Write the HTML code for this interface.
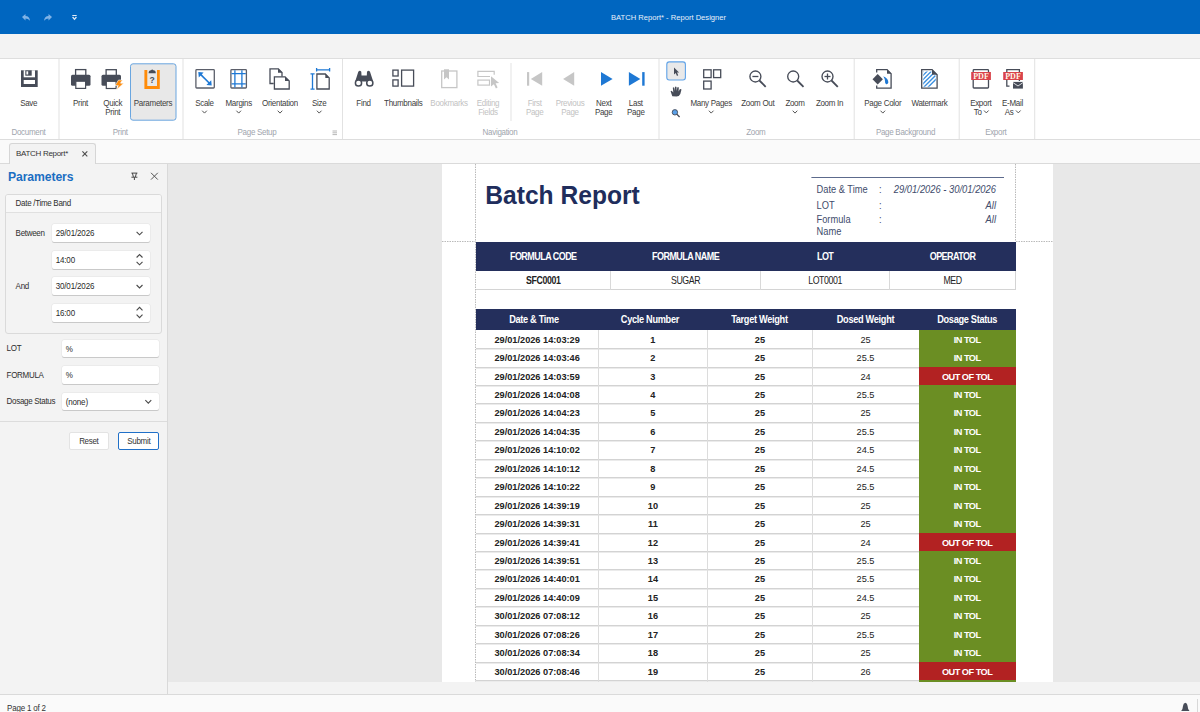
<!DOCTYPE html>
<html><head><meta charset="utf-8">
<style>
*{box-sizing:border-box;margin:0;padding:0}
html,body{width:1200px;height:712px;overflow:hidden;background:#f3f3f3;font-family:"Liberation Sans",sans-serif;color:#3b3b3b}
.a{position:absolute}
.lbl{position:absolute;font-size:8px;letter-spacing:-0.3px;transform:scaleY(1.18);transform-origin:50% 7.7px;color:#404040;text-align:center;white-space:nowrap;line-height:9px}
.glbl{position:absolute;font-size:8px;letter-spacing:-0.3px;transform:scaleY(1.18);transform-origin:50% 7.7px;color:#a0a5ad;text-align:center;white-space:nowrap;line-height:9px}
.dis{color:#c2c2c2}
svg{position:absolute;overflow:visible}
.inp{position:absolute;background:#fff;border-radius:2px;box-shadow:0 1px 0 #c9c9c9,0 0 0 0.5px #e3e3e3;font-size:8px;letter-spacing:-0.15px;color:#2a2a2a;padding-left:4px}
.plbl{position:absolute;font-size:8px;letter-spacing:-0.3px;transform:translateY(0.8px) scaleY(1.18);transform-origin:0 8.2px;color:#2e2e2e;white-space:nowrap;line-height:10px}
.hdr{position:absolute;background:#242f5c}
.cell{position:absolute;text-align:center;white-space:nowrap;color:#222}
.inp span{display:inline-block;transform:translateY(0.8px) scaleY(1.18)}

</style></head><body>
<div class="a" style="left:0;top:0;width:1200px;height:34px;background:#0066c0"></div>
<div class="a" style="left:0;top:11.5px;width:1337px;text-align:center;font-size:7.6px;color:#e8f0fa;line-height:12px;white-space:nowrap">BATCH Report* - Report Designer</div>
<div class="a" style="left:0;top:34px;width:1200px;height:24px;background:#f3f3f3"></div>
<div class="a" style="left:0;top:58px;width:1200px;height:1px;background:#dedede"></div>
<div class="a" style="left:0;top:59px;width:1200px;height:80px;background:#fff"></div>
<div class="a" style="left:0;top:139px;width:1200px;height:1px;background:#dddddd"></div>
<div class="a" style="left:0;top:140px;width:1200px;height:23px;background:#fafafa"></div>
<div class="a" style="left:0;top:163px;width:1200px;height:1px;background:#dadada"></div>
<div class="a" style="left:9px;top:143px;width:87px;height:21px;background:#f3f3f3;border:1px solid #d6d6d6;border-bottom:none;border-radius:3px 3px 0 0"></div>
<div class="a" style="left:16px;top:148.5px;font-size:8px;letter-spacing:-0.3px;color:#333;line-height:10px;white-space:nowrap">BATCH Report*</div>
<div class="a" style="left:0;top:164px;width:167px;height:530px;background:#f3f3f3"></div>
<div class="a" style="left:167px;top:164px;width:1px;height:530px;background:#d9d9d9"></div>
<div class="a" style="left:168px;top:164px;width:1032px;height:518px;background:#e8e8e8"></div>
<div class="a" style="left:442px;top:164px;width:611px;height:518px;background:#fff"></div>
<svg style="left:0;top:0" width="1200" height="140"><path d="M22 17 L25.5 14 L25.5 16 Q29.5 16 30 20.8 Q28 18.6 25.5 18.6 L25.5 20.5 Z" fill="#80b3e6"/><path d="M52 17 L48.5 14 L48.5 16 Q44.5 16 44 20.8 Q46 18.6 48.5 18.6 L48.5 20.5 Z" fill="#80b3e6"/><rect x="72.3" y="15" width="4.4" height="1" fill="#dfeaf7"/><path d="M72.6 17 L74.5 19.3 L76.4 17" fill="none" stroke="#dfeaf7" stroke-width="1.3"/><rect x="21" y="70.3" width="16.7" height="16.7" fill="#474c58"/><rect x="23.7" y="70.3" width="11.3" height="7" fill="#fff"/><rect x="25.3" y="70.3" width="6.4" height="5.4" fill="#474c58"/><rect x="26.4" y="71.3" width="1.8" height="3.2" fill="#fff"/><rect x="23.7" y="80" width="11.3" height="4" fill="#fff"/><rect x="75.6" y="69.6" width="10.2" height="7" fill="#fff" stroke="#474c58" stroke-width="1.3"/><rect x="71" y="74.7" width="19.5" height="11" rx="1.5" fill="#474c58"/><rect x="75.8" y="81.2" width="9.8" height="7.2" fill="#fff" stroke="#474c58" stroke-width="1.2"/><rect x="106.1" y="69.69999999999999" width="10.2" height="7" fill="#fff" stroke="#474c58" stroke-width="1.3"/><rect x="101.5" y="74.8" width="19.5" height="11" rx="1.5" fill="#474c58"/><rect x="106.3" y="81.3" width="9.8" height="7.2" fill="#fff" stroke="#474c58" stroke-width="1.2"/><path d="M118.5 80 L115 85.5 L118.3 85.5 L116.5 89.7 L123.7 83.2 L120.2 83.2 L122.5 80 Z" fill="#ff8c0a" stroke="#fff" stroke-width="0.6"/><rect x="130.5" y="63.8" width="45.5" height="56.4" rx="2.5" fill="#e8e8e8" stroke="#6aa6e0" stroke-width="1"/><path d="M144.4 70.1 L147.3 70.1 L147.3 85.9 L157 85.9 L157 70.1 L159.8 70.1 L159.8 89.1 L144.4 89.1 Z" fill="#ff8c0a"/><path d="M148.6 73.2 Q148.6 70.4 151 70.2 Q152.2 68.6 153.4 70.2 Q155.8 70.4 155.8 73.2 Z" fill="#474c58"/><text x="152.1" y="83" font-family="Liberation Sans" font-weight="bold" font-size="8.5" fill="#474c58" text-anchor="middle">?</text><rect x="195.9" y="69.6" width="18.4" height="18.4" rx="0.8" fill="#fff" stroke="#5b5f6a" stroke-width="1.3"/><path d="M200.3 74.1 L209.7 83.5" stroke="#1e78d4" stroke-width="1.6"/><path d="M198.3 72.1 L203.6 72.6 L198.8 77.4 Z M211.7 85.5 L206.4 85 L211.2 80.2 Z" fill="#1e78d4"/><rect x="230.9" y="69.6" width="15.5" height="18.4" rx="0.8" fill="#fff" stroke="#5b5f6a" stroke-width="1.3"/><path d="M234.9 70.2 V87.4 M241.9 70.2 V87.4 M231.5 73.6 H245.8 M231.5 83.8 H245.8" stroke="#1e78d4" stroke-width="1.3"/><path d="M273.7 83.5 H270 V68.8 H278.3 L282 72.5 V76.5" fill="none" stroke="#474c58" stroke-width="1.3"/><path d="M278 68.5 L282.3 72.8 L278 72.8 Z" fill="#474c58"/><path d="M274.4 76.9 H285 L289.2 81.1 V89 H274.4 Z" fill="#fff" stroke="#474c58" stroke-width="1.3"/><path d="M285 76.6 L289.5 81.1 L285 81.1 Z" fill="#474c58"/><path d="M316.9 74 H325.3 L329.2 77.9 V89 H316.9 Z" fill="#fff" stroke="#474c58" stroke-width="1.3"/><path d="M325.3 73.7 L329.5 77.9 L325.3 77.9 Z" fill="#474c58"/><path d="M312.5 73.8 V89.2 M310.5 73.8 H314.6 M310.5 89.2 H314.6 M317 69.8 H329.6 M316.6 68 V71.6 M329.6 68 V71.6" stroke="#1e78d4" stroke-width="1.3"/><path d="M355.2 81.5 L358.3 71.8 Q359.8 69.8 361.3 71.8 L361.5 75.5 L366.8 75.5 L367 71.8 Q368.5 69.8 370 71.8 L373.2 81.5 Z" fill="#474c58"/><circle cx="358.5" cy="83" r="3.1" fill="#fff" stroke="#474c58" stroke-width="1.5"/><circle cx="369.8" cy="83" r="3.1" fill="#fff" stroke="#474c58" stroke-width="1.5"/><rect x="392.9" y="70.1" width="5.2" height="5.9" fill="none" stroke="#474c58" stroke-width="1.3"/><rect x="392.9" y="79.9" width="5.2" height="6.2" fill="none" stroke="#474c58" stroke-width="1.3"/><rect x="401.6" y="70.1" width="12" height="16" fill="none" stroke="#474c58" stroke-width="1.3"/><rect x="441.7" y="71" width="15.2" height="16.6" fill="none" stroke="#c6c6c6" stroke-width="1.3"/><path d="M444 69.3 H449 V79.5 L446.5 77.3 L444 79.5 Z" fill="#c6c6c6"/><path d="M490 76.5 H477.9 V71.3 H494.2 V74.8" fill="none" stroke="#c6c6c6" stroke-width="1.2"/><rect x="477.9" y="80.1" width="11.6" height="5" fill="none" stroke="#c6c6c6" stroke-width="1.2"/><path d="M491 76.3 L499.2 83 L495.6 83.3 L497.6 87.6 L495.9 88.4 L493.9 84.2 L491 86.6 Z" fill="#c6c6c6"/><rect x="527" y="72.1" width="2.2" height="13.6" fill="#c6c6c6"/><path d="M542.2 72.1 V85.7 L530.8 78.9 Z" fill="#c6c6c6"/><path d="M574.2 72.1 V85.7 L563.1 78.9 Z" fill="#c6c6c6"/><path d="M601 72.1 V85.7 L612.6 78.9 Z" fill="#1e78d4"/><path d="M628.9 72.1 V85.7 L640.3 78.9 Z" fill="#1e78d4"/><rect x="642.2" y="72.1" width="2.4" height="13.6" fill="#1e78d4"/><rect x="510.5" y="63" width="1" height="58" fill="#e4e4e4"/><rect x="666.8" y="61.9" width="18.6" height="18.1" rx="2.5" fill="#e9e9e9" stroke="#60a3e8" stroke-width="1.1"/><path d="M674 67.4 V74.6 L675.7 73.1 L677 75.9 L678.2 75.3 L677 72.6 L679.1 72.4 Z" fill="#474c58"/><path d="M672.3 96.2 L670.6 91.3 Q671.3 90.3 672.4 91.5 L673.3 92.6 L672.8 87.8 Q673.5 86.9 674.3 87.8 L674.8 91 L675 86.9 Q675.8 86.2 676.5 86.9 L676.7 91 L677.3 87.4 Q678.1 86.7 678.8 87.5 L678.6 91.5 L679.8 89.2 Q680.8 88.8 681.5 89.6 L680.3 94 Q679.2 96.6 676.5 96.6 Z" fill="#474c58"/><circle cx="674.9" cy="112.3" r="2.7" fill="#5aa0e8" stroke="#474c58" stroke-width="0.9"/><path d="M676.9 114.3 L679.6 117" stroke="#474c58" stroke-width="1.3"/><rect x="703.7" y="69.8" width="7.4" height="7.8" fill="none" stroke="#474c58" stroke-width="1.3"/><rect x="713.6" y="69.8" width="7.1" height="7.8" fill="none" stroke="#474c58" stroke-width="1.3"/><rect x="703.7" y="81.1" width="7.4" height="7.9" fill="none" stroke="#474c58" stroke-width="1.3"/><circle cx="755.4" cy="76.5" r="5.5" fill="none" stroke="#474c58" stroke-width="1.35"/><path d="M759.4 80.5 L765.6999999999999 86.8" stroke="#474c58" stroke-width="1.8"/><path d="M752.4 76.5 H758.4" stroke="#474c58" stroke-width="1.3"/><circle cx="793.2" cy="76.5" r="5.5" fill="none" stroke="#474c58" stroke-width="1.35"/><path d="M797.2 80.5 L803.5 86.8" stroke="#474c58" stroke-width="1.8"/><circle cx="827.5" cy="76.5" r="5.5" fill="none" stroke="#474c58" stroke-width="1.35"/><path d="M831.5 80.5 L837.8 86.8" stroke="#474c58" stroke-width="1.8"/><path d="M824.5 76.5 H830.5" stroke="#474c58" stroke-width="1.3"/><path d="M827.5 73.5 V79.5" stroke="#474c58" stroke-width="1.3"/><path d="M876.7 72.5 V69.6 H887 L891.1 73.7 V88.1 H876.7 V85.5" fill="#fff" stroke="#474c58" stroke-width="1.3"/><path d="M887 69.3 L891.4 73.7 L887 73.7 Z" fill="#474c58"/><path d="M877.7 74.1 L882.9 79.3 L877.7 84.5 L872.5 79.3 Z" fill="#474c58"/><path d="M883.3 76.2 Q888.6 78.6 888.3 82.8 Q887.8 84.4 886.2 84.2 Q884.8 83.6 885 81 Q884.8 78.5 883.3 76.2 Z" fill="#1e78d4"/><defs><clipPath id="wm"><path d="M923.2 71.4 H931.3 L935.8 75.9 V86.7 H923.2 Z"/></clipPath></defs><path d="M921.7 69.6 H932 L937.1 74.7 V88.1 H921.7 Z" fill="#fff" stroke="#474c58" stroke-width="1.3"/><g clip-path="url(#wm)"><path d="M906.2 88 L924.2 70" stroke="#3a8fe0" stroke-width="1.35"/><path d="M910.4 88 L928.4 70" stroke="#3a8fe0" stroke-width="1.35"/><path d="M914.6 88 L932.6 70" stroke="#3a8fe0" stroke-width="1.35"/><path d="M918.8 88 L936.8 70" stroke="#3a8fe0" stroke-width="1.35"/><path d="M923 88 L941 70" stroke="#3a8fe0" stroke-width="1.35"/><path d="M927.2 88 L945.2 70" stroke="#3a8fe0" stroke-width="1.35"/></g><path d="M932 69.3 L937.4 74.7 L932 74.7 Z" fill="#474c58"/><rect x="973.2" y="69.7" width="15.3" height="18.3" rx="0.8" fill="#fff" stroke="#474c58" stroke-width="1.3"/><rect x="971.2" y="72" width="19.7" height="8" fill="#d9434a"/><text x="981" y="79.1" font-family="Liberation Serif" font-weight="bold" font-size="8" fill="#fff6e8" text-anchor="middle">PDF</text><path d="M1009.5 86.1 H1006.8 V69.7 H1019.4 V81" fill="#fff" stroke="#474c58" stroke-width="1.3"/><rect x="1003.2" y="72" width="19.7" height="8" fill="#d9434a"/><text x="1013" y="79.1" font-family="Liberation Serif" font-weight="bold" font-size="8" fill="#fff6e8" text-anchor="middle">PDF</text><rect x="1013" y="81.9" width="9.9" height="6.7" fill="#474c58"/><path d="M1013 82.6 L1018 86 L1022.9 82.6" fill="none" stroke="#fff" stroke-width="0.8"/><path d="M202.20 110.70 L204.50 113.10 L206.80 110.70" fill="none" stroke="#555" stroke-width="1"/><path d="M236.40 110.70 L238.70 113.10 L241.00 110.70" fill="none" stroke="#555" stroke-width="1"/><path d="M277.70 110.70 L280.00 113.10 L282.30 110.70" fill="none" stroke="#555" stroke-width="1"/><path d="M316.90 110.70 L319.20 113.10 L321.50 110.70" fill="none" stroke="#555" stroke-width="1"/><path d="M708.90 110.70 L711.20 113.10 L713.50 110.70" fill="none" stroke="#555" stroke-width="1"/><path d="M792.70 110.70 L795.00 113.10 L797.30 110.70" fill="none" stroke="#555" stroke-width="1"/><path d="M880.50 110.70 L882.80 113.10 L885.10 110.70" fill="none" stroke="#555" stroke-width="1"/><path d="M984.00 110.50 L986.30 112.90 L988.60 110.50" fill="none" stroke="#555" stroke-width="1"/><path d="M1016.00 110.50 L1018.30 112.90 L1020.60 110.50" fill="none" stroke="#555" stroke-width="1"/><path d="M332.5 131 H337 M332.5 132.8 H337 M332.5 134.6 H337" stroke="#9a9a9a" stroke-width="0.7"/><rect x="58.5" y="59" width="1" height="80" fill="#e2e2e2"/><rect x="182.5" y="59" width="1" height="80" fill="#e2e2e2"/><rect x="342.0" y="59" width="1" height="80" fill="#e2e2e2"/><rect x="658.5" y="59" width="1" height="80" fill="#e2e2e2"/><rect x="853.7" y="59" width="1" height="80" fill="#e2e2e2"/><rect x="958.7" y="59" width="1" height="80" fill="#e2e2e2"/><rect x="1034.2" y="59" width="1" height="80" fill="#e2e2e2"/></svg>
<div class="lbl" style="left:-11.30px;top:98.80px;width:80px">Save</div>
<div class="lbl" style="left:40.50px;top:98.80px;width:80px">Print</div>
<div class="lbl" style="left:113.00px;top:98.80px;width:80px">Parameters</div>
<div class="lbl" style="left:164.50px;top:98.80px;width:80px">Scale</div>
<div class="lbl" style="left:198.70px;top:98.80px;width:80px">Margins</div>
<div class="lbl" style="left:240.00px;top:98.80px;width:80px">Orientation</div>
<div class="lbl" style="left:279.20px;top:98.80px;width:80px">Size</div>
<div class="lbl" style="left:323.50px;top:98.80px;width:80px">Find</div>
<div class="lbl" style="left:363.30px;top:98.80px;width:80px">Thumbnails</div>
<div class="lbl dis" style="left:409.00px;top:98.80px;width:80px">Bookmarks</div>
<div class="lbl" style="left:671.20px;top:98.80px;width:80px">Many Pages</div>
<div class="lbl" style="left:717.80px;top:98.80px;width:80px">Zoom Out</div>
<div class="lbl" style="left:755.00px;top:98.80px;width:80px">Zoom</div>
<div class="lbl" style="left:789.50px;top:98.80px;width:80px">Zoom In</div>
<div class="lbl" style="left:842.80px;top:98.80px;width:80px">Page Color</div>
<div class="lbl" style="left:889.50px;top:98.80px;width:80px">Watermark</div>
<div class="lbl" style="left:72.80px;top:98.80px;width:80px">Quick</div>
<div class="lbl" style="left:72.80px;top:107.70px;width:80px">Print</div>
<div class="lbl dis" style="left:448.00px;top:98.80px;width:80px">Editing</div>
<div class="lbl dis" style="left:448.00px;top:107.70px;width:80px">Fields</div>
<div class="lbl dis" style="left:494.70px;top:98.80px;width:80px">First</div>
<div class="lbl dis" style="left:494.70px;top:107.70px;width:80px">Page</div>
<div class="lbl dis" style="left:530.00px;top:98.80px;width:80px">Previous</div>
<div class="lbl dis" style="left:530.00px;top:107.70px;width:80px">Page</div>
<div class="lbl" style="left:563.70px;top:98.80px;width:80px">Next</div>
<div class="lbl" style="left:563.70px;top:107.70px;width:80px">Page</div>
<div class="lbl" style="left:595.80px;top:98.80px;width:80px">Last</div>
<div class="lbl" style="left:595.80px;top:107.70px;width:80px">Page</div>
<div class="lbl" style="left:940.80px;top:98.80px;width:80px">Export</div>
<div class="lbl" style="left:940.80px;top:107.70px;width:80px"></div>
<div class="lbl" style="left:972.50px;top:98.80px;width:80px">E-Mail</div>
<div class="lbl" style="left:972.50px;top:107.70px;width:80px"></div>
<div class="glbl" style="left:-21.50px;top:128.20px;width:100px">Document</div>
<div class="glbl" style="left:70.30px;top:128.20px;width:100px">Print</div>
<div class="glbl" style="left:207.00px;top:128.20px;width:100px">Page Setup</div>
<div class="glbl" style="left:450.00px;top:128.20px;width:100px">Navigation</div>
<div class="glbl" style="left:705.80px;top:128.20px;width:100px">Zoom</div>
<div class="glbl" style="left:855.50px;top:128.20px;width:100px">Page Background</div>
<div class="glbl" style="left:945.80px;top:128.20px;width:100px">Export</div>
<div class="lbl" style="left:937.80px;top:107.70px;width:80px">To</div>
<div class="lbl" style="left:969.20px;top:107.70px;width:80px">As</div>

<div class="a" style="left:8px;top:169.5px;font-size:12.2px;font-weight:bold;color:#1b6ec2;line-height:14px;white-space:nowrap;letter-spacing:-0.1px">Parameters</div>
<svg style="left:0;top:0" width="170" height="460"><path d="M131.4 173.1 H137.4 M132.4 173.1 L133.4 176.9 M136.4 173.1 L135.4 176.9 M131.4 177.2 H137.4 M134.4 177.2 V180" fill="none" stroke="#444" stroke-width="1"/><path d="M151 172.8 L157.8 179.6 M157.8 172.8 L151 179.6" stroke="#555" stroke-width="1"/><path d="M82.4 151.4 L87.3 156.3 M87.3 151.4 L82.4 156.3" stroke="#4c4c4c" stroke-width="1.1"/></svg>
<div class="a" style="left:5px;top:193.5px;width:157px;height:140px;border:1px solid #dadada;border-radius:3px;background:#f3f3f3"></div>
<div class="a" style="left:6px;top:194.5px;width:155px;height:18.5px;background:#f8f8f8;border-bottom:1px solid #e0e0e0;border-radius:2px 2px 0 0"></div>
<div class="plbl" style="left:15.6px;top:198.2px">Date /Time Band</div>
<div class="plbl" style="left:15.6px;top:228.2px">Between</div>
<div class="plbl" style="left:15.6px;top:281px">And</div>
<div class="inp" style="left:51.7px;top:224px;width:98.40px;height:18.20px;line-height:18.20px"><span style="transform-origin:0 11.87px">29/01/2026</span></div>
<div class="inp" style="left:51.7px;top:251px;width:98.40px;height:18.00px;line-height:18.00px"><span style="transform-origin:0 11.77px">14:00</span></div>
<div class="inp" style="left:51.7px;top:277.3px;width:98.40px;height:18.00px;line-height:18.00px"><span style="transform-origin:0 11.77px">30/01/2026</span></div>
<div class="inp" style="left:51.7px;top:303.8px;width:98.40px;height:18.40px;line-height:18.40px"><span style="transform-origin:0 11.97px">16:00</span></div>
<div class="inp" style="left:61.7px;top:339.5px;width:97.50px;height:17.90px;line-height:17.90px"><span style="transform-origin:0 11.72px">%</span></div>
<div class="inp" style="left:61.7px;top:366.2px;width:97.50px;height:18.00px;line-height:18.00px"><span style="transform-origin:0 11.77px">%</span></div>
<div class="inp" style="left:61.7px;top:392.5px;width:97.50px;height:17.80px;line-height:17.80px"><span style="transform-origin:0 11.67px">(none)</span></div>
<div class="plbl" style="left:6.6px;top:343.3px">LOT</div>
<div class="plbl" style="left:6.6px;top:369.7px">FORMULA</div>
<div class="plbl" style="left:6.6px;top:396.4px">Dosage Status</div>
<div class="a" style="left:0;top:420.5px;width:167px;height:1px;background:#dcdcdc"></div>
<div class="a" style="left:68.5px;top:432px;width:40.7px;height:18.2px;background:#fff;border:1px solid #e3e3e3;border-radius:2px;font-size:8px;letter-spacing:-0.3px;color:#333;text-align:center;line-height:16px"><span style="display:inline-block;transform:translateY(0.8px) scaleY(1.18);transform-origin:50% 10.8px">Reset</span></div>
<div class="a" style="left:118.2px;top:432px;width:41.2px;height:18.3px;background:#fff;border:1.4px solid #2070c8;border-radius:2px;font-size:8px;letter-spacing:-0.3px;color:#333;text-align:center;line-height:15.5px"><span style="display:inline-block;transform:translateY(0.8px) scaleY(1.18);transform-origin:50% 10.5px">Submit</span></div>
<svg style="left:0;top:0" width="170" height="460"><path d="M136.60 231.80 L139.55 234.80 L142.50 231.80" fill="none" stroke="#4a4a4a" stroke-width="1.1"/><path d="M136.60 285.00 L139.55 288.00 L142.50 285.00" fill="none" stroke="#4a4a4a" stroke-width="1.1"/><path d="M145.35 400.10 L148.30 403.10 L151.25 400.10" fill="none" stroke="#4a4a4a" stroke-width="1.1"/><path d="M136.60 257.50 L139.55 254.50 L142.50 257.50" fill="none" stroke="#4a4a4a" stroke-width="1.1"/><path d="M136.60 261.80 L139.55 264.80 L142.50 261.80" fill="none" stroke="#4a4a4a" stroke-width="1.1"/><path d="M136.60 310.30 L139.55 307.30 L142.50 310.30" fill="none" stroke="#4a4a4a" stroke-width="1.1"/><path d="M136.60 314.60 L139.55 317.60 L142.50 314.60" fill="none" stroke="#4a4a4a" stroke-width="1.1"/></svg>
<svg style="left:0;top:0" width="1200" height="712"><path d="M475.5 164 V682 M1015.5 164 V241.5" stroke="#a8a8a8" stroke-width="0.8" stroke-dasharray="1.5 1"/><path d="M442 241.5 H475 M1016 241.5 H1053" stroke="#a8a8a8" stroke-width="0.8" stroke-dasharray="1.5 1"/><path d="M811.4 177.5 H1004" stroke="#5c6a8c" stroke-width="1"/></svg>
<div class="a" style="transform:scaleY(1.05);transform-origin:0 5.3px;left:485.3px;top:181px;font-size:24.6px;font-weight:bold;color:#202d5c;line-height:28px;white-space:nowrap">Batch Report</div>
<div class="a" style="transform:translateY(0.6px) scaleY(1.08);transform-origin:0 8.8px;left:816.5px;top:184.3px;font-size:9.3px;color:#414c6c;line-height:10px;white-space:nowrap">Date &amp; Time</div>
<div class="a" style="transform:translateY(0.6px) scaleY(1.08);transform-origin:0 8.8px;left:816.5px;top:200px;font-size:9.3px;color:#414c6c;line-height:10px;white-space:nowrap">LOT</div>
<div class="a" style="transform:translateY(0.6px) scaleY(1.08);transform-origin:0 8.8px;left:816.5px;top:214px;font-size:9.3px;color:#414c6c;line-height:10px;white-space:nowrap">Formula</div>
<div class="a" style="transform:translateY(0.6px) scaleY(1.08);transform-origin:0 8.8px;left:816.5px;top:226.3px;font-size:9.3px;color:#414c6c;line-height:10px;white-space:nowrap">Name</div>
<div class="a" style="transform:translateY(0.6px) scaleY(1.08);transform-origin:0 8.8px;left:879px;top:184.3px;font-size:9.3px;color:#414c6c;line-height:10px">:</div>
<div class="a" style="transform:translateY(0.6px) scaleY(1.08);transform-origin:0 8.8px;left:879px;top:200px;font-size:9.3px;color:#414c6c;line-height:10px">:</div>
<div class="a" style="transform:translateY(0.6px) scaleY(1.08);transform-origin:0 8.8px;left:879px;top:214px;font-size:9.3px;color:#414c6c;line-height:10px">:</div>
<div class="a" style="transform:translateY(0.6px) scaleY(1.08);transform-origin:0 8.8px;left:796px;top:184.3px;width:200px;text-align:right;font-size:9.4px;font-style:italic;color:#414c6c;line-height:10px;white-space:nowrap">29/01/2026 - 30/01/2026</div>
<div class="a" style="transform:translateY(0.6px) scaleY(1.08);transform-origin:0 8.8px;left:796px;top:200px;width:200px;text-align:right;font-size:9.4px;font-style:italic;color:#414c6c;line-height:10px;white-space:nowrap">All</div>
<div class="a" style="transform:translateY(0.6px) scaleY(1.08);transform-origin:0 8.8px;left:796px;top:214px;width:200px;text-align:right;font-size:9.4px;font-style:italic;color:#414c6c;line-height:10px;white-space:nowrap">All</div>
<div class="hdr" style="left:476px;top:241.5px;width:539.6px;height:29.5px"></div>
<div class="cell" style="transform:scaleY(1.18);transform-origin:50% 8px;left:476px;top:251.8px;width:134.50px;font-size:9px;letter-spacing:-0.55px;font-weight:bold;color:#fff;line-height:10px">FORMULA CODE</div>
<div class="cell" style="transform:scaleY(1.18);transform-origin:50% 8px;left:610.5px;top:251.8px;width:150.20px;font-size:9px;letter-spacing:-0.55px;font-weight:bold;color:#fff;line-height:10px">FORMULA NAME</div>
<div class="cell" style="transform:scaleY(1.18);transform-origin:50% 8px;left:760.7px;top:251.8px;width:128.90px;font-size:9px;letter-spacing:-0.55px;font-weight:bold;color:#fff;line-height:10px">LOT</div>
<div class="cell" style="transform:scaleY(1.18);transform-origin:50% 8px;left:889.6px;top:251.8px;width:126.00px;font-size:9px;letter-spacing:-0.55px;font-weight:bold;color:#fff;line-height:10px">OPERATOR</div>
<div class="a" style="left:476px;top:271px;width:539.6px;height:19px;background:#fff;border-bottom:1px solid #d4d4d4;border-right:1px solid #d4d4d4"></div>
<div class="a" style="left:610.0px;top:271px;width:1px;height:19px;background:#d9d9d9"></div>
<div class="a" style="left:760.2px;top:271px;width:1px;height:19px;background:#d9d9d9"></div>
<div class="a" style="left:889.1px;top:271px;width:1px;height:19px;background:#d9d9d9"></div>
<div class="cell" style="transform:scaleY(1.15);transform-origin:50% 8px;left:476px;top:276.3px;width:134.50px;font-size:8.8px;letter-spacing:-0.4px;font-weight:bold;line-height:10px">SFC0001</div>
<div class="cell" style="transform:scaleY(1.15);transform-origin:50% 8px;left:610.5px;top:276.3px;width:150.20px;font-size:8.8px;letter-spacing:-0.4px;font-weight:normal;line-height:10px">SUGAR</div>
<div class="cell" style="transform:scaleY(1.15);transform-origin:50% 8px;left:760.7px;top:276.3px;width:128.90px;font-size:8.8px;letter-spacing:-0.4px;font-weight:normal;line-height:10px">LOT0001</div>
<div class="cell" style="transform:scaleY(1.15);transform-origin:50% 8px;left:889.6px;top:276.3px;width:126.00px;font-size:8.8px;letter-spacing:-0.4px;font-weight:normal;line-height:10px">MED</div>
<div class="hdr" style="left:476px;top:308.7px;width:539.6px;height:21px"></div>
<div class="cell" style="transform:scaleY(1.15);transform-origin:50% 8px;left:472.8px;top:314.6px;width:122.30px;font-size:9.2px;letter-spacing:-0.3px;font-weight:bold;color:#fff;line-height:10px">Date &amp; Time</div>
<div class="cell" style="transform:scaleY(1.15);transform-origin:50% 8px;left:595.3px;top:314.6px;width:109.20px;font-size:9.2px;letter-spacing:-0.3px;font-weight:bold;color:#fff;line-height:10px">Cycle Number</div>
<div class="cell" style="transform:scaleY(1.15);transform-origin:50% 8px;left:707.0px;top:314.6px;width:104.80px;font-size:9.2px;letter-spacing:-0.3px;font-weight:bold;color:#fff;line-height:10px">Target Weight</div>
<div class="cell" style="transform:scaleY(1.15);transform-origin:50% 8px;left:812.3px;top:314.6px;width:106.40px;font-size:9.2px;letter-spacing:-0.3px;font-weight:bold;color:#fff;line-height:10px">Dosed Weight</div>
<div class="cell" style="transform:scaleY(1.15);transform-origin:50% 8px;left:918.7px;top:314.6px;width:96.90px;font-size:9.2px;letter-spacing:-0.3px;font-weight:bold;color:#fff;line-height:10px">Dosage Status</div>
<div class="a" style="left:918.7px;top:329.70px;width:96.9px;height:18.54px;background:#6b8e23"></div>
<div class="a" style="left:476px;top:348px;width:442.7px;height:1px;background:#d3d3d3;box-shadow:0 1px 0 #ebebeb"></div>
<div class="a" style="left:597.8px;top:329.70px;width:1px;height:18.44px;background:#dcdcdc"></div>
<div class="a" style="left:707.0px;top:329.70px;width:1px;height:18.44px;background:#dcdcdc"></div>
<div class="a" style="left:811.8px;top:329.70px;width:1px;height:18.44px;background:#dcdcdc"></div>
<div class="cell" style="left:476px;top:334.70px;width:122.30px;font-size:9.2px;letter-spacing:0px;font-weight:bold;color:#222;line-height:10px">29/01/2026 14:03:29</div>
<div class="cell" style="left:598.3px;top:334.70px;width:109.20px;font-size:9.2px;letter-spacing:0px;font-weight:bold;color:#222;line-height:10px">1</div>
<div class="cell" style="left:707.5px;top:334.70px;width:104.80px;font-size:9.2px;letter-spacing:0px;font-weight:bold;color:#222;line-height:10px">25</div>
<div class="cell" style="left:812.3px;top:334.70px;width:106.40px;font-size:9.2px;letter-spacing:0px;font-weight:normal;color:#222;line-height:10px">25</div>
<div class="cell" style="left:918.7px;top:334.70px;width:96.90px;font-size:9.2px;letter-spacing:-0.5px;font-weight:bold;color:#fff;line-height:10px">IN TOL</div>
<div class="a" style="left:918.7px;top:348.14px;width:96.9px;height:18.54px;background:#6b8e23"></div>
<div class="a" style="left:476px;top:367px;width:442.7px;height:1px;background:#d3d3d3;box-shadow:0 1px 0 #ebebeb"></div>
<div class="a" style="left:597.8px;top:348.14px;width:1px;height:18.44px;background:#dcdcdc"></div>
<div class="a" style="left:707.0px;top:348.14px;width:1px;height:18.44px;background:#dcdcdc"></div>
<div class="a" style="left:811.8px;top:348.14px;width:1px;height:18.44px;background:#dcdcdc"></div>
<div class="cell" style="left:476px;top:353.14px;width:122.30px;font-size:9.2px;letter-spacing:0px;font-weight:bold;color:#222;line-height:10px">29/01/2026 14:03:46</div>
<div class="cell" style="left:598.3px;top:353.14px;width:109.20px;font-size:9.2px;letter-spacing:0px;font-weight:bold;color:#222;line-height:10px">2</div>
<div class="cell" style="left:707.5px;top:353.14px;width:104.80px;font-size:9.2px;letter-spacing:0px;font-weight:bold;color:#222;line-height:10px">25</div>
<div class="cell" style="left:812.3px;top:353.14px;width:106.40px;font-size:9.2px;letter-spacing:0px;font-weight:normal;color:#222;line-height:10px">25.5</div>
<div class="cell" style="left:918.7px;top:353.14px;width:96.90px;font-size:9.2px;letter-spacing:-0.5px;font-weight:bold;color:#fff;line-height:10px">IN TOL</div>
<div class="a" style="left:918.7px;top:366.58px;width:96.9px;height:18.54px;background:#b22222"></div>
<div class="a" style="left:476px;top:385px;width:442.7px;height:1px;background:#d3d3d3;box-shadow:0 1px 0 #ebebeb"></div>
<div class="a" style="left:597.8px;top:366.58px;width:1px;height:18.44px;background:#dcdcdc"></div>
<div class="a" style="left:707.0px;top:366.58px;width:1px;height:18.44px;background:#dcdcdc"></div>
<div class="a" style="left:811.8px;top:366.58px;width:1px;height:18.44px;background:#dcdcdc"></div>
<div class="cell" style="left:476px;top:371.58px;width:122.30px;font-size:9.2px;letter-spacing:0px;font-weight:bold;color:#222;line-height:10px">29/01/2026 14:03:59</div>
<div class="cell" style="left:598.3px;top:371.58px;width:109.20px;font-size:9.2px;letter-spacing:0px;font-weight:bold;color:#222;line-height:10px">3</div>
<div class="cell" style="left:707.5px;top:371.58px;width:104.80px;font-size:9.2px;letter-spacing:0px;font-weight:bold;color:#222;line-height:10px">25</div>
<div class="cell" style="left:812.3px;top:371.58px;width:106.40px;font-size:9.2px;letter-spacing:0px;font-weight:normal;color:#222;line-height:10px">24</div>
<div class="cell" style="left:918.7px;top:371.58px;width:96.90px;font-size:9.2px;letter-spacing:-0.5px;font-weight:bold;color:#fff;line-height:10px">OUT OF TOL</div>
<div class="a" style="left:918.7px;top:385.02px;width:96.9px;height:18.54px;background:#6b8e23"></div>
<div class="a" style="left:476px;top:403px;width:442.7px;height:1px;background:#d3d3d3;box-shadow:0 1px 0 #ebebeb"></div>
<div class="a" style="left:597.8px;top:385.02px;width:1px;height:18.44px;background:#dcdcdc"></div>
<div class="a" style="left:707.0px;top:385.02px;width:1px;height:18.44px;background:#dcdcdc"></div>
<div class="a" style="left:811.8px;top:385.02px;width:1px;height:18.44px;background:#dcdcdc"></div>
<div class="cell" style="left:476px;top:390.02px;width:122.30px;font-size:9.2px;letter-spacing:0px;font-weight:bold;color:#222;line-height:10px">29/01/2026 14:04:08</div>
<div class="cell" style="left:598.3px;top:390.02px;width:109.20px;font-size:9.2px;letter-spacing:0px;font-weight:bold;color:#222;line-height:10px">4</div>
<div class="cell" style="left:707.5px;top:390.02px;width:104.80px;font-size:9.2px;letter-spacing:0px;font-weight:bold;color:#222;line-height:10px">25</div>
<div class="cell" style="left:812.3px;top:390.02px;width:106.40px;font-size:9.2px;letter-spacing:0px;font-weight:normal;color:#222;line-height:10px">25.5</div>
<div class="cell" style="left:918.7px;top:390.02px;width:96.90px;font-size:9.2px;letter-spacing:-0.5px;font-weight:bold;color:#fff;line-height:10px">IN TOL</div>
<div class="a" style="left:918.7px;top:403.46px;width:96.9px;height:18.54px;background:#6b8e23"></div>
<div class="a" style="left:476px;top:422px;width:442.7px;height:1px;background:#d3d3d3;box-shadow:0 1px 0 #ebebeb"></div>
<div class="a" style="left:597.8px;top:403.46px;width:1px;height:18.44px;background:#dcdcdc"></div>
<div class="a" style="left:707.0px;top:403.46px;width:1px;height:18.44px;background:#dcdcdc"></div>
<div class="a" style="left:811.8px;top:403.46px;width:1px;height:18.44px;background:#dcdcdc"></div>
<div class="cell" style="left:476px;top:408.46px;width:122.30px;font-size:9.2px;letter-spacing:0px;font-weight:bold;color:#222;line-height:10px">29/01/2026 14:04:23</div>
<div class="cell" style="left:598.3px;top:408.46px;width:109.20px;font-size:9.2px;letter-spacing:0px;font-weight:bold;color:#222;line-height:10px">5</div>
<div class="cell" style="left:707.5px;top:408.46px;width:104.80px;font-size:9.2px;letter-spacing:0px;font-weight:bold;color:#222;line-height:10px">25</div>
<div class="cell" style="left:812.3px;top:408.46px;width:106.40px;font-size:9.2px;letter-spacing:0px;font-weight:normal;color:#222;line-height:10px">25</div>
<div class="cell" style="left:918.7px;top:408.46px;width:96.90px;font-size:9.2px;letter-spacing:-0.5px;font-weight:bold;color:#fff;line-height:10px">IN TOL</div>
<div class="a" style="left:918.7px;top:421.90px;width:96.9px;height:18.54px;background:#6b8e23"></div>
<div class="a" style="left:476px;top:440px;width:442.7px;height:1px;background:#d3d3d3;box-shadow:0 1px 0 #ebebeb"></div>
<div class="a" style="left:597.8px;top:421.90px;width:1px;height:18.44px;background:#dcdcdc"></div>
<div class="a" style="left:707.0px;top:421.90px;width:1px;height:18.44px;background:#dcdcdc"></div>
<div class="a" style="left:811.8px;top:421.90px;width:1px;height:18.44px;background:#dcdcdc"></div>
<div class="cell" style="left:476px;top:426.90px;width:122.30px;font-size:9.2px;letter-spacing:0px;font-weight:bold;color:#222;line-height:10px">29/01/2026 14:04:35</div>
<div class="cell" style="left:598.3px;top:426.90px;width:109.20px;font-size:9.2px;letter-spacing:0px;font-weight:bold;color:#222;line-height:10px">6</div>
<div class="cell" style="left:707.5px;top:426.90px;width:104.80px;font-size:9.2px;letter-spacing:0px;font-weight:bold;color:#222;line-height:10px">25</div>
<div class="cell" style="left:812.3px;top:426.90px;width:106.40px;font-size:9.2px;letter-spacing:0px;font-weight:normal;color:#222;line-height:10px">25.5</div>
<div class="cell" style="left:918.7px;top:426.90px;width:96.90px;font-size:9.2px;letter-spacing:-0.5px;font-weight:bold;color:#fff;line-height:10px">IN TOL</div>
<div class="a" style="left:918.7px;top:440.34px;width:96.9px;height:18.54px;background:#6b8e23"></div>
<div class="a" style="left:476px;top:459px;width:442.7px;height:1px;background:#d3d3d3;box-shadow:0 1px 0 #ebebeb"></div>
<div class="a" style="left:597.8px;top:440.34px;width:1px;height:18.44px;background:#dcdcdc"></div>
<div class="a" style="left:707.0px;top:440.34px;width:1px;height:18.44px;background:#dcdcdc"></div>
<div class="a" style="left:811.8px;top:440.34px;width:1px;height:18.44px;background:#dcdcdc"></div>
<div class="cell" style="left:476px;top:445.34px;width:122.30px;font-size:9.2px;letter-spacing:0px;font-weight:bold;color:#222;line-height:10px">29/01/2026 14:10:02</div>
<div class="cell" style="left:598.3px;top:445.34px;width:109.20px;font-size:9.2px;letter-spacing:0px;font-weight:bold;color:#222;line-height:10px">7</div>
<div class="cell" style="left:707.5px;top:445.34px;width:104.80px;font-size:9.2px;letter-spacing:0px;font-weight:bold;color:#222;line-height:10px">25</div>
<div class="cell" style="left:812.3px;top:445.34px;width:106.40px;font-size:9.2px;letter-spacing:0px;font-weight:normal;color:#222;line-height:10px">24.5</div>
<div class="cell" style="left:918.7px;top:445.34px;width:96.90px;font-size:9.2px;letter-spacing:-0.5px;font-weight:bold;color:#fff;line-height:10px">IN TOL</div>
<div class="a" style="left:918.7px;top:458.78px;width:96.9px;height:18.54px;background:#6b8e23"></div>
<div class="a" style="left:476px;top:477px;width:442.7px;height:1px;background:#d3d3d3;box-shadow:0 1px 0 #ebebeb"></div>
<div class="a" style="left:597.8px;top:458.78px;width:1px;height:18.44px;background:#dcdcdc"></div>
<div class="a" style="left:707.0px;top:458.78px;width:1px;height:18.44px;background:#dcdcdc"></div>
<div class="a" style="left:811.8px;top:458.78px;width:1px;height:18.44px;background:#dcdcdc"></div>
<div class="cell" style="left:476px;top:463.78px;width:122.30px;font-size:9.2px;letter-spacing:0px;font-weight:bold;color:#222;line-height:10px">29/01/2026 14:10:12</div>
<div class="cell" style="left:598.3px;top:463.78px;width:109.20px;font-size:9.2px;letter-spacing:0px;font-weight:bold;color:#222;line-height:10px">8</div>
<div class="cell" style="left:707.5px;top:463.78px;width:104.80px;font-size:9.2px;letter-spacing:0px;font-weight:bold;color:#222;line-height:10px">25</div>
<div class="cell" style="left:812.3px;top:463.78px;width:106.40px;font-size:9.2px;letter-spacing:0px;font-weight:normal;color:#222;line-height:10px">24.5</div>
<div class="cell" style="left:918.7px;top:463.78px;width:96.90px;font-size:9.2px;letter-spacing:-0.5px;font-weight:bold;color:#fff;line-height:10px">IN TOL</div>
<div class="a" style="left:918.7px;top:477.22px;width:96.9px;height:18.54px;background:#6b8e23"></div>
<div class="a" style="left:476px;top:496px;width:442.7px;height:1px;background:#d3d3d3;box-shadow:0 1px 0 #ebebeb"></div>
<div class="a" style="left:597.8px;top:477.22px;width:1px;height:18.44px;background:#dcdcdc"></div>
<div class="a" style="left:707.0px;top:477.22px;width:1px;height:18.44px;background:#dcdcdc"></div>
<div class="a" style="left:811.8px;top:477.22px;width:1px;height:18.44px;background:#dcdcdc"></div>
<div class="cell" style="left:476px;top:482.22px;width:122.30px;font-size:9.2px;letter-spacing:0px;font-weight:bold;color:#222;line-height:10px">29/01/2026 14:10:22</div>
<div class="cell" style="left:598.3px;top:482.22px;width:109.20px;font-size:9.2px;letter-spacing:0px;font-weight:bold;color:#222;line-height:10px">9</div>
<div class="cell" style="left:707.5px;top:482.22px;width:104.80px;font-size:9.2px;letter-spacing:0px;font-weight:bold;color:#222;line-height:10px">25</div>
<div class="cell" style="left:812.3px;top:482.22px;width:106.40px;font-size:9.2px;letter-spacing:0px;font-weight:normal;color:#222;line-height:10px">25.5</div>
<div class="cell" style="left:918.7px;top:482.22px;width:96.90px;font-size:9.2px;letter-spacing:-0.5px;font-weight:bold;color:#fff;line-height:10px">IN TOL</div>
<div class="a" style="left:918.7px;top:495.66px;width:96.9px;height:18.54px;background:#6b8e23"></div>
<div class="a" style="left:476px;top:514px;width:442.7px;height:1px;background:#d3d3d3;box-shadow:0 1px 0 #ebebeb"></div>
<div class="a" style="left:597.8px;top:495.66px;width:1px;height:18.44px;background:#dcdcdc"></div>
<div class="a" style="left:707.0px;top:495.66px;width:1px;height:18.44px;background:#dcdcdc"></div>
<div class="a" style="left:811.8px;top:495.66px;width:1px;height:18.44px;background:#dcdcdc"></div>
<div class="cell" style="left:476px;top:500.66px;width:122.30px;font-size:9.2px;letter-spacing:0px;font-weight:bold;color:#222;line-height:10px">29/01/2026 14:39:19</div>
<div class="cell" style="left:598.3px;top:500.66px;width:109.20px;font-size:9.2px;letter-spacing:0px;font-weight:bold;color:#222;line-height:10px">10</div>
<div class="cell" style="left:707.5px;top:500.66px;width:104.80px;font-size:9.2px;letter-spacing:0px;font-weight:bold;color:#222;line-height:10px">25</div>
<div class="cell" style="left:812.3px;top:500.66px;width:106.40px;font-size:9.2px;letter-spacing:0px;font-weight:normal;color:#222;line-height:10px">25</div>
<div class="cell" style="left:918.7px;top:500.66px;width:96.90px;font-size:9.2px;letter-spacing:-0.5px;font-weight:bold;color:#fff;line-height:10px">IN TOL</div>
<div class="a" style="left:918.7px;top:514.10px;width:96.9px;height:18.54px;background:#6b8e23"></div>
<div class="a" style="left:476px;top:533px;width:442.7px;height:1px;background:#d3d3d3;box-shadow:0 1px 0 #ebebeb"></div>
<div class="a" style="left:597.8px;top:514.10px;width:1px;height:18.44px;background:#dcdcdc"></div>
<div class="a" style="left:707.0px;top:514.10px;width:1px;height:18.44px;background:#dcdcdc"></div>
<div class="a" style="left:811.8px;top:514.10px;width:1px;height:18.44px;background:#dcdcdc"></div>
<div class="cell" style="left:476px;top:519.10px;width:122.30px;font-size:9.2px;letter-spacing:0px;font-weight:bold;color:#222;line-height:10px">29/01/2026 14:39:31</div>
<div class="cell" style="left:598.3px;top:519.10px;width:109.20px;font-size:9.2px;letter-spacing:0px;font-weight:bold;color:#222;line-height:10px">11</div>
<div class="cell" style="left:707.5px;top:519.10px;width:104.80px;font-size:9.2px;letter-spacing:0px;font-weight:bold;color:#222;line-height:10px">25</div>
<div class="cell" style="left:812.3px;top:519.10px;width:106.40px;font-size:9.2px;letter-spacing:0px;font-weight:normal;color:#222;line-height:10px">25</div>
<div class="cell" style="left:918.7px;top:519.10px;width:96.90px;font-size:9.2px;letter-spacing:-0.5px;font-weight:bold;color:#fff;line-height:10px">IN TOL</div>
<div class="a" style="left:918.7px;top:532.54px;width:96.9px;height:18.54px;background:#b22222"></div>
<div class="a" style="left:476px;top:551px;width:442.7px;height:1px;background:#d3d3d3;box-shadow:0 1px 0 #ebebeb"></div>
<div class="a" style="left:597.8px;top:532.54px;width:1px;height:18.44px;background:#dcdcdc"></div>
<div class="a" style="left:707.0px;top:532.54px;width:1px;height:18.44px;background:#dcdcdc"></div>
<div class="a" style="left:811.8px;top:532.54px;width:1px;height:18.44px;background:#dcdcdc"></div>
<div class="cell" style="left:476px;top:537.54px;width:122.30px;font-size:9.2px;letter-spacing:0px;font-weight:bold;color:#222;line-height:10px">29/01/2026 14:39:41</div>
<div class="cell" style="left:598.3px;top:537.54px;width:109.20px;font-size:9.2px;letter-spacing:0px;font-weight:bold;color:#222;line-height:10px">12</div>
<div class="cell" style="left:707.5px;top:537.54px;width:104.80px;font-size:9.2px;letter-spacing:0px;font-weight:bold;color:#222;line-height:10px">25</div>
<div class="cell" style="left:812.3px;top:537.54px;width:106.40px;font-size:9.2px;letter-spacing:0px;font-weight:normal;color:#222;line-height:10px">24</div>
<div class="cell" style="left:918.7px;top:537.54px;width:96.90px;font-size:9.2px;letter-spacing:-0.5px;font-weight:bold;color:#fff;line-height:10px">OUT OF TOL</div>
<div class="a" style="left:918.7px;top:550.98px;width:96.9px;height:18.54px;background:#6b8e23"></div>
<div class="a" style="left:476px;top:569px;width:442.7px;height:1px;background:#d3d3d3;box-shadow:0 1px 0 #ebebeb"></div>
<div class="a" style="left:597.8px;top:550.98px;width:1px;height:18.44px;background:#dcdcdc"></div>
<div class="a" style="left:707.0px;top:550.98px;width:1px;height:18.44px;background:#dcdcdc"></div>
<div class="a" style="left:811.8px;top:550.98px;width:1px;height:18.44px;background:#dcdcdc"></div>
<div class="cell" style="left:476px;top:555.98px;width:122.30px;font-size:9.2px;letter-spacing:0px;font-weight:bold;color:#222;line-height:10px">29/01/2026 14:39:51</div>
<div class="cell" style="left:598.3px;top:555.98px;width:109.20px;font-size:9.2px;letter-spacing:0px;font-weight:bold;color:#222;line-height:10px">13</div>
<div class="cell" style="left:707.5px;top:555.98px;width:104.80px;font-size:9.2px;letter-spacing:0px;font-weight:bold;color:#222;line-height:10px">25</div>
<div class="cell" style="left:812.3px;top:555.98px;width:106.40px;font-size:9.2px;letter-spacing:0px;font-weight:normal;color:#222;line-height:10px">25.5</div>
<div class="cell" style="left:918.7px;top:555.98px;width:96.90px;font-size:9.2px;letter-spacing:-0.5px;font-weight:bold;color:#fff;line-height:10px">IN TOL</div>
<div class="a" style="left:918.7px;top:569.42px;width:96.9px;height:18.54px;background:#6b8e23"></div>
<div class="a" style="left:476px;top:588px;width:442.7px;height:1px;background:#d3d3d3;box-shadow:0 1px 0 #ebebeb"></div>
<div class="a" style="left:597.8px;top:569.42px;width:1px;height:18.44px;background:#dcdcdc"></div>
<div class="a" style="left:707.0px;top:569.42px;width:1px;height:18.44px;background:#dcdcdc"></div>
<div class="a" style="left:811.8px;top:569.42px;width:1px;height:18.44px;background:#dcdcdc"></div>
<div class="cell" style="left:476px;top:574.42px;width:122.30px;font-size:9.2px;letter-spacing:0px;font-weight:bold;color:#222;line-height:10px">29/01/2026 14:40:01</div>
<div class="cell" style="left:598.3px;top:574.42px;width:109.20px;font-size:9.2px;letter-spacing:0px;font-weight:bold;color:#222;line-height:10px">14</div>
<div class="cell" style="left:707.5px;top:574.42px;width:104.80px;font-size:9.2px;letter-spacing:0px;font-weight:bold;color:#222;line-height:10px">25</div>
<div class="cell" style="left:812.3px;top:574.42px;width:106.40px;font-size:9.2px;letter-spacing:0px;font-weight:normal;color:#222;line-height:10px">25.5</div>
<div class="cell" style="left:918.7px;top:574.42px;width:96.90px;font-size:9.2px;letter-spacing:-0.5px;font-weight:bold;color:#fff;line-height:10px">IN TOL</div>
<div class="a" style="left:918.7px;top:587.86px;width:96.9px;height:18.54px;background:#6b8e23"></div>
<div class="a" style="left:476px;top:606px;width:442.7px;height:1px;background:#d3d3d3;box-shadow:0 1px 0 #ebebeb"></div>
<div class="a" style="left:597.8px;top:587.86px;width:1px;height:18.44px;background:#dcdcdc"></div>
<div class="a" style="left:707.0px;top:587.86px;width:1px;height:18.44px;background:#dcdcdc"></div>
<div class="a" style="left:811.8px;top:587.86px;width:1px;height:18.44px;background:#dcdcdc"></div>
<div class="cell" style="left:476px;top:592.86px;width:122.30px;font-size:9.2px;letter-spacing:0px;font-weight:bold;color:#222;line-height:10px">29/01/2026 14:40:09</div>
<div class="cell" style="left:598.3px;top:592.86px;width:109.20px;font-size:9.2px;letter-spacing:0px;font-weight:bold;color:#222;line-height:10px">15</div>
<div class="cell" style="left:707.5px;top:592.86px;width:104.80px;font-size:9.2px;letter-spacing:0px;font-weight:bold;color:#222;line-height:10px">25</div>
<div class="cell" style="left:812.3px;top:592.86px;width:106.40px;font-size:9.2px;letter-spacing:0px;font-weight:normal;color:#222;line-height:10px">24.5</div>
<div class="cell" style="left:918.7px;top:592.86px;width:96.90px;font-size:9.2px;letter-spacing:-0.5px;font-weight:bold;color:#fff;line-height:10px">IN TOL</div>
<div class="a" style="left:918.7px;top:606.30px;width:96.9px;height:18.54px;background:#6b8e23"></div>
<div class="a" style="left:476px;top:625px;width:442.7px;height:1px;background:#d3d3d3;box-shadow:0 1px 0 #ebebeb"></div>
<div class="a" style="left:597.8px;top:606.30px;width:1px;height:18.44px;background:#dcdcdc"></div>
<div class="a" style="left:707.0px;top:606.30px;width:1px;height:18.44px;background:#dcdcdc"></div>
<div class="a" style="left:811.8px;top:606.30px;width:1px;height:18.44px;background:#dcdcdc"></div>
<div class="cell" style="left:476px;top:611.30px;width:122.30px;font-size:9.2px;letter-spacing:0px;font-weight:bold;color:#222;line-height:10px">30/01/2026 07:08:12</div>
<div class="cell" style="left:598.3px;top:611.30px;width:109.20px;font-size:9.2px;letter-spacing:0px;font-weight:bold;color:#222;line-height:10px">16</div>
<div class="cell" style="left:707.5px;top:611.30px;width:104.80px;font-size:9.2px;letter-spacing:0px;font-weight:bold;color:#222;line-height:10px">25</div>
<div class="cell" style="left:812.3px;top:611.30px;width:106.40px;font-size:9.2px;letter-spacing:0px;font-weight:normal;color:#222;line-height:10px">25</div>
<div class="cell" style="left:918.7px;top:611.30px;width:96.90px;font-size:9.2px;letter-spacing:-0.5px;font-weight:bold;color:#fff;line-height:10px">IN TOL</div>
<div class="a" style="left:918.7px;top:624.74px;width:96.9px;height:18.54px;background:#6b8e23"></div>
<div class="a" style="left:476px;top:643px;width:442.7px;height:1px;background:#d3d3d3;box-shadow:0 1px 0 #ebebeb"></div>
<div class="a" style="left:597.8px;top:624.74px;width:1px;height:18.44px;background:#dcdcdc"></div>
<div class="a" style="left:707.0px;top:624.74px;width:1px;height:18.44px;background:#dcdcdc"></div>
<div class="a" style="left:811.8px;top:624.74px;width:1px;height:18.44px;background:#dcdcdc"></div>
<div class="cell" style="left:476px;top:629.74px;width:122.30px;font-size:9.2px;letter-spacing:0px;font-weight:bold;color:#222;line-height:10px">30/01/2026 07:08:26</div>
<div class="cell" style="left:598.3px;top:629.74px;width:109.20px;font-size:9.2px;letter-spacing:0px;font-weight:bold;color:#222;line-height:10px">17</div>
<div class="cell" style="left:707.5px;top:629.74px;width:104.80px;font-size:9.2px;letter-spacing:0px;font-weight:bold;color:#222;line-height:10px">25</div>
<div class="cell" style="left:812.3px;top:629.74px;width:106.40px;font-size:9.2px;letter-spacing:0px;font-weight:normal;color:#222;line-height:10px">25.5</div>
<div class="cell" style="left:918.7px;top:629.74px;width:96.90px;font-size:9.2px;letter-spacing:-0.5px;font-weight:bold;color:#fff;line-height:10px">IN TOL</div>
<div class="a" style="left:918.7px;top:643.18px;width:96.9px;height:18.54px;background:#6b8e23"></div>
<div class="a" style="left:476px;top:662px;width:442.7px;height:1px;background:#d3d3d3;box-shadow:0 1px 0 #ebebeb"></div>
<div class="a" style="left:597.8px;top:643.18px;width:1px;height:18.44px;background:#dcdcdc"></div>
<div class="a" style="left:707.0px;top:643.18px;width:1px;height:18.44px;background:#dcdcdc"></div>
<div class="a" style="left:811.8px;top:643.18px;width:1px;height:18.44px;background:#dcdcdc"></div>
<div class="cell" style="left:476px;top:648.18px;width:122.30px;font-size:9.2px;letter-spacing:0px;font-weight:bold;color:#222;line-height:10px">30/01/2026 07:08:34</div>
<div class="cell" style="left:598.3px;top:648.18px;width:109.20px;font-size:9.2px;letter-spacing:0px;font-weight:bold;color:#222;line-height:10px">18</div>
<div class="cell" style="left:707.5px;top:648.18px;width:104.80px;font-size:9.2px;letter-spacing:0px;font-weight:bold;color:#222;line-height:10px">25</div>
<div class="cell" style="left:812.3px;top:648.18px;width:106.40px;font-size:9.2px;letter-spacing:0px;font-weight:normal;color:#222;line-height:10px">25</div>
<div class="cell" style="left:918.7px;top:648.18px;width:96.90px;font-size:9.2px;letter-spacing:-0.5px;font-weight:bold;color:#fff;line-height:10px">IN TOL</div>
<div class="a" style="left:918.7px;top:661.62px;width:96.9px;height:18.54px;background:#b22222"></div>
<div class="a" style="left:476px;top:680px;width:442.7px;height:1px;background:#d3d3d3;box-shadow:0 1px 0 #ebebeb"></div>
<div class="a" style="left:597.8px;top:661.62px;width:1px;height:18.44px;background:#dcdcdc"></div>
<div class="a" style="left:707.0px;top:661.62px;width:1px;height:18.44px;background:#dcdcdc"></div>
<div class="a" style="left:811.8px;top:661.62px;width:1px;height:18.44px;background:#dcdcdc"></div>
<div class="cell" style="left:476px;top:666.62px;width:122.30px;font-size:9.2px;letter-spacing:0px;font-weight:bold;color:#222;line-height:10px">30/01/2026 07:08:46</div>
<div class="cell" style="left:598.3px;top:666.62px;width:109.20px;font-size:9.2px;letter-spacing:0px;font-weight:bold;color:#222;line-height:10px">19</div>
<div class="cell" style="left:707.5px;top:666.62px;width:104.80px;font-size:9.2px;letter-spacing:0px;font-weight:bold;color:#222;line-height:10px">25</div>
<div class="cell" style="left:812.3px;top:666.62px;width:106.40px;font-size:9.2px;letter-spacing:0px;font-weight:normal;color:#222;line-height:10px">26</div>
<div class="cell" style="left:918.7px;top:666.62px;width:96.90px;font-size:9.2px;letter-spacing:-0.5px;font-weight:bold;color:#fff;line-height:10px">OUT OF TOL</div>
<div class="a" style="left:918.7px;top:680.06px;width:96.9px;height:18.54px;background:#6b8e23"></div>
<div class="a" style="left:476px;top:698px;width:442.7px;height:1px;background:#d3d3d3;box-shadow:0 1px 0 #ebebeb"></div>
<div class="a" style="left:597.8px;top:680.06px;width:1px;height:18.44px;background:#dcdcdc"></div>
<div class="a" style="left:707.0px;top:680.06px;width:1px;height:18.44px;background:#dcdcdc"></div>
<div class="a" style="left:811.8px;top:680.06px;width:1px;height:18.44px;background:#dcdcdc"></div>
<div class="cell" style="left:476px;top:685.06px;width:122.30px;font-size:9.2px;letter-spacing:0px;font-weight:bold;color:#222;line-height:10px">30/01/2026 07:08:55</div>
<div class="cell" style="left:598.3px;top:685.06px;width:109.20px;font-size:9.2px;letter-spacing:0px;font-weight:bold;color:#222;line-height:10px">20</div>
<div class="cell" style="left:707.5px;top:685.06px;width:104.80px;font-size:9.2px;letter-spacing:0px;font-weight:bold;color:#222;line-height:10px">25</div>
<div class="cell" style="left:812.3px;top:685.06px;width:106.40px;font-size:9.2px;letter-spacing:0px;font-weight:normal;color:#222;line-height:10px">25</div>
<div class="cell" style="left:918.7px;top:685.06px;width:96.90px;font-size:9.2px;letter-spacing:-0.5px;font-weight:bold;color:#fff;line-height:10px">IN TOL</div>
<div class="a" style="left:168px;top:682px;width:1032px;height:12px;background:#f3f3f3"></div>
<div class="a" style="left:0;top:694px;width:1200px;height:1px;background:#dadada"></div>
<div class="a" style="left:0;top:695px;width:1200px;height:17px;background:#fafafa"></div>
<div class="a" style="transform:translateY(1px) scaleY(1.15);transform-origin:0 8.2px;left:7px;top:702.5px;font-size:8px;letter-spacing:-0.2px;color:#333;line-height:10px;white-space:nowrap">Page 1 of 2</div>
<svg style="left:0;top:0" width="1200" height="712"><path d="M1181.2 711 Q1182.8 709.5 1183 706 Q1183.3 703 1185.3 702.7 Q1187.4 703 1187.6 706 Q1187.8 709.5 1189.5 711 Z" fill="#474c58"/><rect x="1197" y="699" width="0.8" height="13" fill="#d0d0d0"/></svg>
</body></html>
